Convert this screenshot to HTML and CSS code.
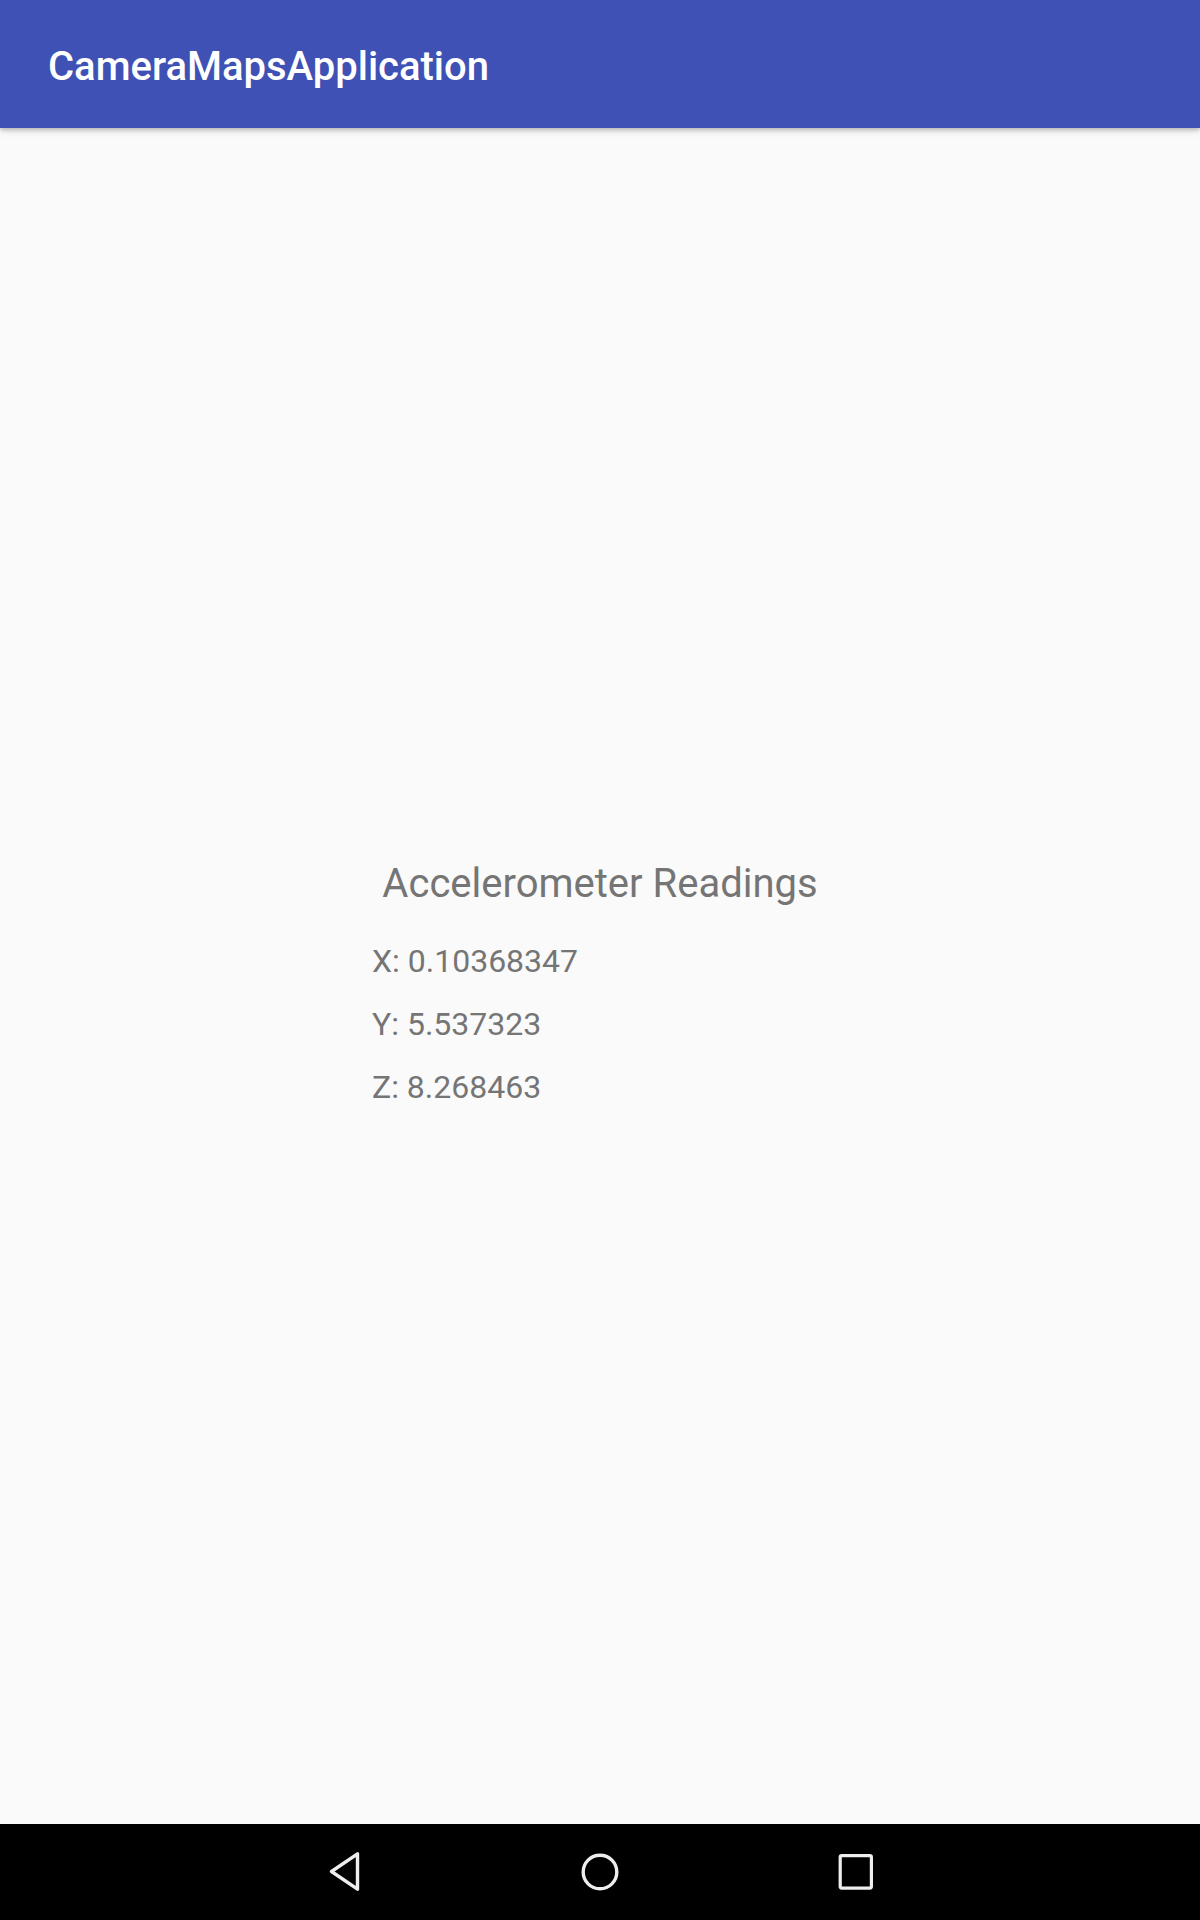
FILE: index.html
```html
<!DOCTYPE html>
<html lang="en">
<head>
<meta charset="utf-8">
<title>CameraMapsApplication</title>
<link rel="stylesheet" href="styles.css">
</head>
<body>
<div class="screen">
  <header class="appbar">
    <h1 class="title">CameraMapsApplication</h1>
  </header>
  <main class="content">
    <section class="panel">
      <h2 class="heading">Accelerometer Readings</h2>
      <p class="reading">X: 0.10368347</p>
      <p class="reading">Y: 5.537323</p>
      <p class="reading">Z: 8.268463</p>
    </section>
  </main>
  <nav class="navbar">
    <div class="navbtn">
      <svg width="40" height="40" viewBox="0 0 40 40"><path d="M7.5 19.5 L33.5 1.8 L33.5 37.2 Z" fill="none" stroke="#eeeeee" stroke-width="3.4" stroke-linejoin="round"/></svg>
    </div>
    <div class="navbtn">
      <svg width="40" height="40" viewBox="0 0 40 40"><circle cx="20" cy="20" r="16.8" fill="none" stroke="#eeeeee" stroke-width="3.4"/></svg>
    </div>
    <div class="navbtn">
      <svg width="40" height="40" viewBox="0 0 40 40"><rect x="4.2" y="3.7" width="31.2" height="32.4" rx="1.5" fill="none" stroke="#eeeeee" stroke-width="3.2"/></svg>
    </div>
  </nav>
</div>
</body>
</html>
```

FILE: styles.css
```css
html, body {
  margin: 0;
  padding: 0;
}

body {
  font-family: Roboto, "Noto Sans", "Liberation Sans", sans-serif;
  background: #fafafa;
}

.screen {
  width: 1200px;
  height: 1920px;
  display: flex;
  flex-direction: column;
  background: #fafafa;
  overflow: hidden;
}

.appbar {
  position: relative;
  z-index: 1;
  height: 128px;
  flex: 0 0 128px;
  box-sizing: border-box;
  background: #3f51b5;
  display: flex;
  align-items: center;
  padding-left: 48px;
  padding-top: 5px;
  box-shadow: 0 2px 4px rgba(0, 0, 0, 0.22), 0 4px 8px rgba(0, 0, 0, 0.08);
}

.title {
  margin: 0;
  color: #ffffff;
  font-size: 40px;
  font-weight: 500;
  line-height: 48px;
}

.content {
  flex: 1 1 auto;
  display: flex;
  align-items: center;
  justify-content: center;
  padding-top: 11px;
}

.panel {
  width: 456px;
  display: flex;
  flex-direction: column;
}

.heading {
  margin: 0;
  padding-top: 3px;
  text-align: center;
  color: #757575;
  font-size: 40px;
  font-weight: 400;
  line-height: 48px;
}

.reading {
  margin: 25px 0 0 0;
  color: #757575;
  font-size: 32px;
  line-height: 38px;
}

.heading + .reading {
  margin-top: 34px;
}

.navbar {
  flex: 0 0 96px;
  height: 96px;
  background: #000000;
  display: flex;
  justify-content: center;
  align-items: center;
}

.navbtn {
  width: 256px;
  height: 96px;
  display: flex;
  align-items: center;
  justify-content: center;
}

.navbtn svg {
  display: block;
}
```
